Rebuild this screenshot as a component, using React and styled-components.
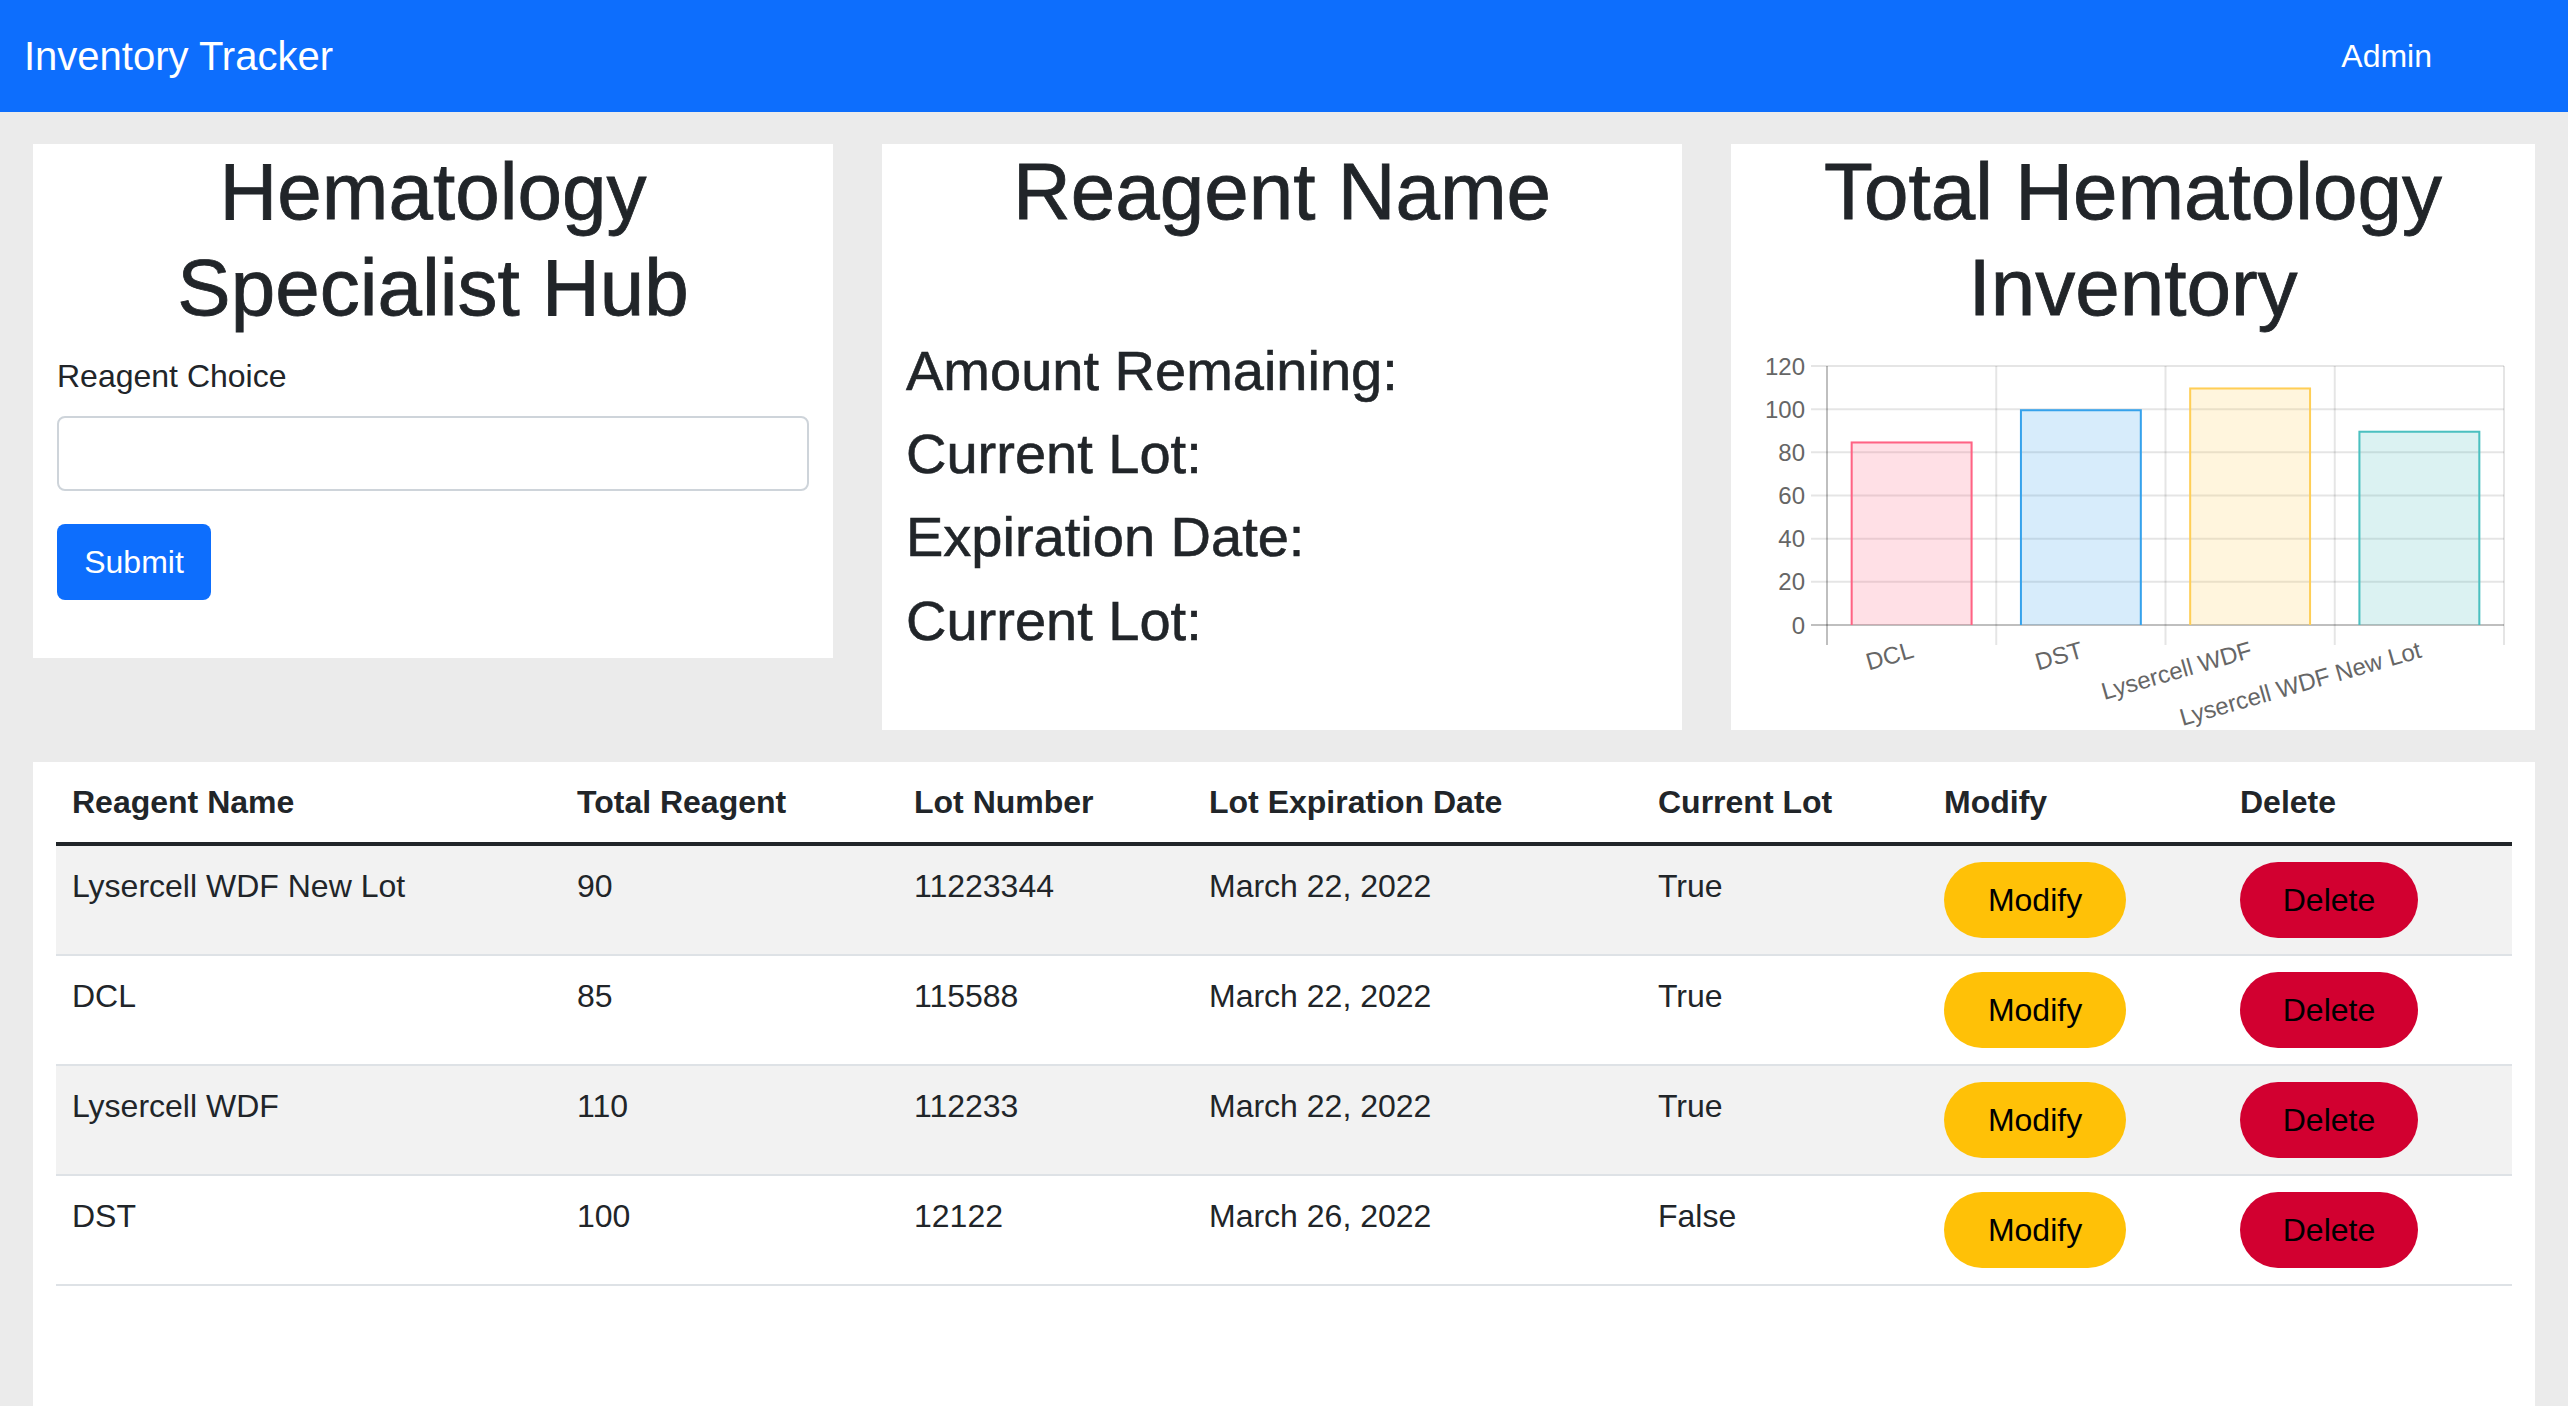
import React from "react";
import styled, { createGlobalStyle } from "styled-components";

const GlobalStyle = createGlobalStyle`
  html, body {
    margin: 0;
    padding: 0;
    background: #ebebeb;
  }
  * {
    box-sizing: border-box;
  }
`;

const Page = styled.div`
  min-height: 100vh;
  background: #ebebeb;
  color: #212529;
  font-family: "Liberation Sans", Arial, Helvetica, sans-serif;
`;

const Navbar = styled.nav`
  height: 112px;
  background: #0d6efd;
  display: flex;
  align-items: center;
  justify-content: space-between;
  padding: 0 136px 0 24px;
`;

const Brand = styled.a`
  color: #fff;
  font-size: 40px;
  text-decoration: none;
`;

const NavLink = styled.a`
  color: #fff;
  font-size: 32px;
  text-decoration: none;
`;

const Main = styled.main`
  padding: 32px 33px 0;
  display: flex;
  flex-direction: column;
  gap: 32px;
`;

const CardRow = styled.div`
  display: flex;
  gap: 49px;
  align-items: flex-start;
`;

const Card = styled.section`
  flex: 1;
  background: #fff;
  padding: 0 24px ${(p) => p.$bottom || 0}px;
`;

const Title = styled.h1`
  margin: 0 0 16px;
  font-size: 80px;
  font-weight: 400;
  line-height: 96px;
  text-align: center;
  -webkit-text-stroke: 0.8px #212529;
`;

const Label = styled.label`
  display: block;
  font-size: 32px;
  line-height: 48px;
  margin-bottom: 16px;
`;

const Input = styled.input`
  display: block;
  width: 100%;
  height: 75px;
  border: 2px solid #ced4da;
  border-radius: 8px;
  background: #fff;
  font-size: 32px;
  padding: 0 24px;
`;

const SubmitButton = styled.button`
  margin-top: 33px;
  width: 154px;
  height: 76px;
  border: none;
  border-radius: 8px;
  background: #0d6efd;
  color: #fff;
  font-family: inherit;
  font-size: 32px;
`;

const Details = styled.div`
  padding-top: 81px;
`;

const Detail = styled.h3`
  margin: 0 0 16px;
  font-size: 56px;
  font-weight: 400;
  line-height: 1.2;
  -webkit-text-stroke: 0.6px #212529;
`;

const ChartSvg = styled.svg`
  display: block;
  margin: -16px -24px 0;
  width: 804px;
  height: 394px;
  font-family: "Liberation Sans", Helvetica, Arial, sans-serif;
`;

const TableCard = styled.section`
  background: #fff;
  padding: 0 23px 120px;
`;

const Table = styled.table`
  width: 100%;
  border-collapse: collapse;
  table-layout: fixed;
  font-size: 32px;
  line-height: 48px;
`;

const Col = styled.col`
  width: ${(p) => p.$w}px;
`;

const Th = styled.th`
  text-align: left;
  font-weight: 700;
  padding: 16px;
  border-bottom: 4px solid #212529;
`;

const Row = styled.tr`
  background: ${(p) => (p.$striped ? "#f2f2f2" : "#fff")};
`;

const Td = styled.td`
  padding: 16px;
  vertical-align: top;
  border-bottom: 2px solid #dee2e6;
`;

const PillButton = styled.button`
  display: block;
  width: ${(p) => p.$w}px;
  height: 76px;
  border: none;
  border-radius: 38px;
  background: ${(p) => p.$bg};
  color: #000;
  font-family: inherit;
  font-size: 32px;
`;

const reagents = [
  { name: "Lysercell WDF New Lot", total: 90, lot: "11223344", exp: "March 22, 2022", current: "True" },
  { name: "DCL", total: 85, lot: "115588", exp: "March 22, 2022", current: "True" },
  { name: "Lysercell WDF", total: 110, lot: "112233", exp: "March 22, 2022", current: "True" },
  { name: "DST", total: 100, lot: "12122", exp: "March 26, 2022", current: "False" },
];

const chartData = [
  { label: "DCL", value: 85, fill: "rgba(255,99,132,0.2)", line: "rgb(255,99,132)" },
  { label: "DST", value: 100, fill: "rgba(54,162,235,0.2)", line: "rgb(54,162,235)" },
  { label: "Lysercell WDF", value: 110, fill: "rgba(255,206,86,0.2)", line: "rgb(255,206,86)" },
  { label: "Lysercell WDF New Lot", value: 90, fill: "rgba(75,192,192,0.2)", line: "rgb(75,192,192)" },
];

function InventoryChart() {
  const left = 96;
  const right = 773;
  const top = 30;
  const base = 289;
  const perUnit = (base - top) / 120;
  const cat = (right - left) / chartData.length;
  const barW = cat * 0.72;
  const ticks = [0, 20, 40, 60, 80, 100, 120];

  return (
    <ChartSvg viewBox="0 0 804 394">
      {ticks.map((t) => {
        const y = base - t * perUnit;
        return (
          <g key={t}>
            <line x1={80} x2={right} y1={y} y2={y}
              stroke={t === 0 ? "rgba(0,0,0,0.25)" : "rgba(0,0,0,0.1)"} strokeWidth="2" />
            <text x={74} y={y} textAnchor="end" dominantBaseline="central" fontSize="24" fill="#666">{t}</text>
          </g>
        );
      })}
      {[0, 1, 2, 3, 4].map((i) => (
        <line key={i} x1={left + cat * i} x2={left + cat * i} y1={top} y2={base + 20}
          stroke={i === 0 ? "rgba(0,0,0,0.25)" : "rgba(0,0,0,0.1)"} strokeWidth="2" />
      ))}
      {chartData.map((d, i) => {
        const cx = left + cat * (i + 0.5);
        const x = cx - barW / 2;
        const y = base - d.value * perUnit;
        return (
          <g key={d.label}>
            <rect x={x} y={y} width={barW} height={base - y} fill={d.fill} />
            <path d={`M${x + 1} ${base} V${y + 1} H${x + barW - 1} V${base}`}
              fill="none" stroke={d.line} strokeWidth="2" />
            <text x={cx + 1} y={313} textAnchor="end" dominantBaseline="central"
              fontSize="24" fill="#666" transform={`rotate(-16 ${cx + 1} 313)`}>{d.label}</text>
          </g>
        );
      })}
    </ChartSvg>
  );
}

export default function App() {
  return (
    <Page>
      <GlobalStyle />
      <Navbar>
        <Brand href="#">Inventory Tracker</Brand>
        <NavLink href="#">Admin</NavLink>
      </Navbar>
      <Main>
        <CardRow>
          <Card $bottom={58}>
            <Title>Hematology Specialist Hub</Title>
            <form onSubmit={(e) => e.preventDefault()}>
              <Label htmlFor="reagent">Reagent Choice</Label>
              <Input id="reagent" type="text" />
              <SubmitButton type="submit">Submit</SubmitButton>
            </form>
          </Card>
          <Card $bottom={60}>
            <Title>Reagent Name</Title>
            <Details>
              <Detail>Amount Remaining:</Detail>
              <Detail>Current Lot:</Detail>
              <Detail>Expiration Date:</Detail>
              <Detail>Current Lot:</Detail>
            </Details>
          </Card>
          <Card>
            <Title>Total Hematology Inventory</Title>
            <InventoryChart />
          </Card>
        </CardRow>
        <TableCard>
          <Table>
            <colgroup>
              <Col $w={505} />
              <Col $w={337} />
              <Col $w={295} />
              <Col $w={449} />
              <Col $w={286} />
              <Col $w={296} />
              <Col $w={288} />
            </colgroup>
            <thead>
              <tr>
                <Th>Reagent Name</Th>
                <Th>Total Reagent</Th>
                <Th>Lot Number</Th>
                <Th>Lot Expiration Date</Th>
                <Th>Current Lot</Th>
                <Th>Modify</Th>
                <Th>Delete</Th>
              </tr>
            </thead>
            <tbody>
              {reagents.map((r, i) => (
                <Row key={r.lot} $striped={i % 2 === 0}>
                  <Td>{r.name}</Td>
                  <Td>{r.total}</Td>
                  <Td>{r.lot}</Td>
                  <Td>{r.exp}</Td>
                  <Td>{r.current}</Td>
                  <Td><PillButton $w={182} $bg="#ffc107">Modify</PillButton></Td>
                  <Td><PillButton $w={178} $bg="#d20030">Delete</PillButton></Td>
                </Row>
              ))}
            </tbody>
          </Table>
        </TableCard>
      </Main>
    </Page>
  );
}
